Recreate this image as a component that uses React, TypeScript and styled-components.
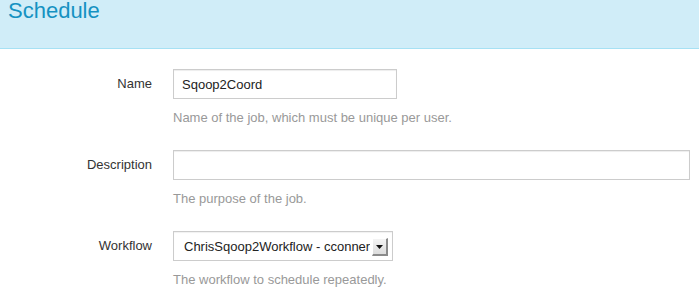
import React from 'react';
import styled, { createGlobalStyle } from 'styled-components';

const GlobalStyle = createGlobalStyle`
  body {
    margin: 0;
    background: #ffffff;
    font-family: 'Liberation Sans', Arial, Helvetica, sans-serif;
  }
`;

const Header = styled.div`
  box-sizing: border-box;
  height: 49px;
  background: #d0edf8;
  border-bottom: 1px solid #a6e1f4;
  padding: 1px 0 0 8px;
`;

const Title = styled.h1`
  margin: 0;
  font-size: 22px;
  line-height: 19px;
  font-weight: normal;
  color: #1592c2;
`;

const Form = styled.form`
  display: flex;
  flex-direction: column;
  gap: 23px;
  padding-top: 20px;
`;

const FieldRow = styled.div`
  display: grid;
  grid-template-columns: 152px 1fr;
  column-gap: 21px;
  align-items: start;
`;

const Label = styled.label`
  text-align: right;
  font-size: 13px;
  line-height: 30px;
  color: #333333;
`;

const Controls = styled.div`
  display: flex;
  flex-direction: column;
  align-items: flex-start;
`;

const TextInput = styled.input<{ $width: number }>`
  box-sizing: border-box;
  width: ${(p) => p.$width}px;
  height: 30px;
  padding: 0 8px;
  border: 1px solid #cccccc;
  border-radius: 0;
  box-shadow: inset 0 1px 1px rgba(0, 0, 0, 0.075);
  font-family: 'Liberation Sans', Arial, sans-serif;
  font-size: 13px;
  color: #222222;
  outline: none;
  caret-color: #000000;
`;

const SelectBox = styled.div`
  box-sizing: border-box;
  width: 220px;
  height: 30px;
  display: flex;
  align-items: center;
  justify-content: space-between;
  padding: 0 4px 0 10px;
  border: 1px solid #cccccc;
  box-shadow: inset 0 1px 1px rgba(0, 0, 0, 0.06);
  font-size: 13px;
  color: #222222;
  white-space: nowrap;
`;

const SelectValue = styled.span`
  overflow: hidden;
`;

const ArrowButton = styled.span`
  box-sizing: border-box;
  width: 16px;
  height: 18px;
  margin-left: 2px;
  margin-top: 2px;
  display: flex;
  align-items: center;
  justify-content: center;
  background: linear-gradient(#f4f4f4, #dcdcdc);
  border-left: 1px solid #ffffff;
  border-top: 1px solid #ffffff;
  border-right: 2px solid #8a8a8a;
  border-bottom: 2px solid #8a8a8a;
`;

const Help = styled.div`
  margin-top: 10px;
  font-size: 13px;
  line-height: 18px;
  color: #999999;
`;

export default function App() {
  return (
    <>
      <GlobalStyle />
      <Header>
        <Title>Schedule</Title>
      </Header>
      <Form>
        <FieldRow>
          <Label>Name</Label>
          <Controls>
            <TextInput $width={224} defaultValue="Sqoop2Coord" autoFocus />
            <Help>Name of the job, which must be unique per user.</Help>
          </Controls>
        </FieldRow>
        <FieldRow>
          <Label>Description</Label>
          <Controls>
            <TextInput $width={517} />
            <Help>The purpose of the job.</Help>
          </Controls>
        </FieldRow>
        <FieldRow>
          <Label>Workflow</Label>
          <Controls>
            <SelectBox>
              <SelectValue>ChrisSqoop2Workflow - cconner</SelectValue>
              <ArrowButton>
                <svg width="7" height="4" viewBox="0 0 7 4">
                  <polygon points="0,0 7,0 3.5,4" fill="#111" />
                </svg>
              </ArrowButton>
            </SelectBox>
            <Help>The workflow to schedule repeatedly.</Help>
          </Controls>
        </FieldRow>
      </Form>
    </>
  );
}
